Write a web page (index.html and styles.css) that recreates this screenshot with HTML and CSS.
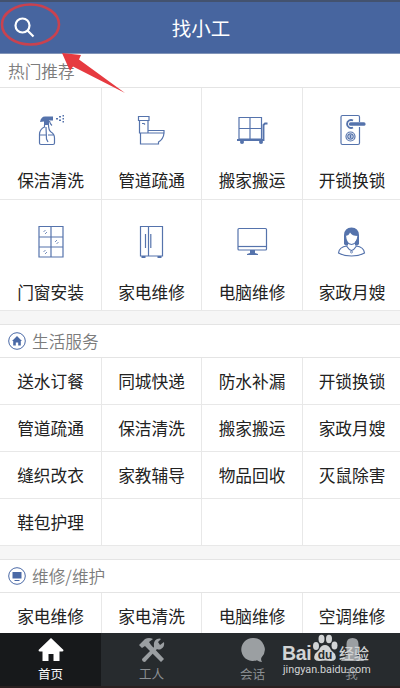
FILE: index.html
```
<!DOCTYPE html>
<html lang="zh-CN">
<head>
    <meta charset="UTF-8">
    <meta name="viewport" content="width=device-width, initial-scale=1.0">
    <title>找小工</title>
    <link rel="stylesheet" href="styles.css">
</head>
<body>
    <div class="app">
        <header class="header">
            <svg class="search-icon" width="22" height="22" viewBox="0 0 22 22">
                <circle cx="8.500" cy="8.500" r="7"/>
                <path d="M13.500 13.500L19.500 19.500"/>
            </svg>
            <h1>找小工</h1>
        </header>

        <section class="section">
            <h2 class="section-title">热门推荐</h2>
            <div class="grid hot">
                <div class="cell">
                    <svg class="icon" viewBox="0 0 41 40">
                        <path class="fill" d="M10 12Q11 6.500 15 6.500H23V10.500H19V15H14V11.500Z"/>
                        <path d="M14.500 15V17Q10 19 9.500 24V33Q9.500 34.500 11 34.500H23Q24.500 34.500 24.500 33V28Q24.500 24 21 22Q18.500 20 18.500 15M19.500 11Q20 14 22 15.500M16 17L16.500 29L18 32M9.500 25H16M18 25H23.500"/>
                        <path class="fill" d="M26 8h2v1.500h-2zM29 6h2v1.500h-2zM29 9.500h2V11h-2zM32.500 5h1.500v1.500h-1.500zM32.500 8h1.500v1.500h-1.500zM32.500 11h1.500v1.500h-1.500z"/>
                    </svg>
                    <span>保洁清洗</span>
                </div>
                <div class="cell">
                    <svg class="icon" viewBox="0 0 41 40">
                        <path d="M7.500 6.500H18V10.500H7.500ZM8.500 10.500V23H17V10.500M11 13.500H13L14 14.500M17 20.500H33V23H9.500V34H27.500V32Q32.500 29 33 23"/>
                    </svg>
                    <span>管道疏通</span>
                </div>
                <div class="cell">
                    <svg class="icon" viewBox="0 0 41 40">
                        <path d="M7 7.500H29.500V29H7ZM18 7.500V29M7 18.500H29.500"/>
                        <path class="thick" d="M5 30H31.500V15L33 13.500H35.500"/>
                        <circle class="fill" cx="10" cy="32" r="2"/>
                        <circle class="fill" cx="29" cy="32" r="2"/>
                    </svg>
                    <span>搬家搬运</span>
                </div>
                <div class="cell">
                    <svg class="icon" viewBox="0 0 41 40">
                        <path d="M27.500 12V7Q27.500 5.500 26 5.500H10.500Q9 5.500 9 7V33Q9 34.500 10.500 34.500H26Q27.500 34.500 27.500 33V17"/>
                        <path class="thick" d="M21 10.500A4 4 0 1 0 21 17.500"/>
                        <rect class="fill" x="17" y="12.300" width="16.500" height="3.500" rx="1.500"/>
                        <circle cx="18.500" cy="26.500" r="4.500"/>
                        <circle cx="18.500" cy="26.500" r="2.700"/>
                        <path class="thick" d="M18.500 24.800V28.200"/>
                    </svg>
                    <span>开锁换锁</span>
                </div>
                <div class="cell">
                    <svg class="icon" viewBox="0 0 41 40">
                        <path d="M9 4.500H33V35H9ZM21 4.500V35M9 15H33M9 25H33"/>
                        <path class="thin" d="M13.500 10l2-2M15 12l2-2M25 20l2-2M26.500 22l2-2M13.500 30l2-2M15 32l2-2"/>
                    </svg>
                    <span>门窗安装</span>
                </div>
                <div class="cell">
                    <svg class="icon" viewBox="0 0 41 40">
                        <path d="M9.500 4.500H31.500V34H9.500ZM17.500 4.500V34M14.500 12V26M19.800 12V26"/>
                        <path class="fill" d="M10.500 34h4v2h-4zM26.500 34h4v2h-4z"/>
                    </svg>
                    <span>家电维修</span>
                </div>
                <div class="cell">
                    <svg class="icon" viewBox="0 0 41 40">
                        <rect x="6" y="6.500" width="28.500" height="21.500" rx="1"/>
                        <path d="M6 24.500H34.500"/>
                        <path class="fill" d="M18 28h5v3l3 1v1H15v-1l3-1z"/>
                    </svg>
                    <span>电脑维修</span>
                </div>
                <div class="cell">
                    <svg class="icon" viewBox="0 0 41 40">
                        <path class="fill" d="M12 22V13Q12.500 5.500 19.500 5.500T27 13V22Q26 24 23 23.500V20Q26 17 26 14Q20 14 18 10.500Q17 13.500 13.500 14Q13.500 18 16 20.500V23.500Q13 24 12 22Z"/>
                        <path d="M13.500 14Q14 22 19.500 22.500Q25 22 26 14M15 24Q7 25 6.500 31Q12 34 19.500 34T32.500 31Q32 25 24 24M14.500 24Q17 28 19.500 28.500Q22 28 24.500 24"/>
                        <circle class="thin" cx="19.500" cy="30" r="1"/>
                    </svg>
                    <span>家政月嫂</span>
                </div>
            </div>
        </section>

        <section class="section">
            <h2 class="section-title with-icon">
                <svg width="18" height="18" viewBox="0 0 18 18">
                    <circle cx="9" cy="9" r="8.300"/>
                    <path class="fill" d="M9 4L14 9H12.800V13.500H10.200V10.500H7.800V13.500H5.200V9H4Z"/>
                </svg>
                生活服务
            </h2>
            <div class="grid list">
                <div class="cell">送水订餐</div>
                <div class="cell">同城快递</div>
                <div class="cell">防水补漏</div>
                <div class="cell">开锁换锁</div>
                <div class="cell">管道疏通</div>
                <div class="cell">保洁清洗</div>
                <div class="cell">搬家搬运</div>
                <div class="cell">家政月嫂</div>
                <div class="cell">缝织改衣</div>
                <div class="cell">家教辅导</div>
                <div class="cell">物品回收</div>
                <div class="cell">灭鼠除害</div>
                <div class="cell">鞋包护理</div>
                <div class="cell"></div>
                <div class="cell"></div>
                <div class="cell"></div>
            </div>
        </section>

        <section class="section">
            <h2 class="section-title with-icon">
                <svg width="18" height="18" viewBox="0 0 18 18">
                    <circle cx="9" cy="9" r="8.300"/>
                    <path class="fill" d="M4.500 5H13.500V11.500H4.500ZM6.500 13H11.500V14H6.500Z"/>
                </svg>
                维修/维护
            </h2>
            <div class="grid list">
                <div class="cell">家电维修</div>
                <div class="cell">家电清洗</div>
                <div class="cell">电脑维修</div>
                <div class="cell">空调维修</div>
            </div>
        </section>

        <nav class="tabbar">
            <div class="tab active">
                <svg viewBox="0 0 28 26"><path d="M14 1L26.500 13Q26.500 14.500 25 14.500H22.500V24H16.500V17H11.500V24H5.500V14.500H3Q1.500 14.500 1.500 13Z"/></svg>
                <span>首页</span>
            </div>
            <div class="tab">
                <svg viewBox="0 0 28 26">
                    <path d="M1 8L7 2Q11 0 15 2L11 5L13 8L26 22L23 25L9 11L7 9L4 11Z"/>
                    <path d="M4 22L16 10Q15 4 19 2Q22 1 23 2L20 5L22 8L26 5Q27 10 23 12Q21 13 19 12L7 25Q4 25 4 22Z"/>
                </svg>
                <span>工人</span>
            </div>
            <div class="tab">
                <svg viewBox="0 0 28 26"><path d="M14 1A11.500 11.500 0 1 0 18 23.200Q20 25 23 25Q21.500 22.500 22.500 20.500A11.500 11.500 0 0 0 14 1Z"/></svg>
                <span>会话</span>
            </div>
            <div class="tab">
                <svg viewBox="0 0 28 26"><path d="M8.500 7Q8.500 1 14.500 1T20.500 7V13Q20.500 16 18 18Q25 20 26 24H3Q4 20 11 18Q8.500 16 8.500 13Z"/></svg>
                <span>我</span>
            </div>
        </nav>

        <div class="watermark">
            <div class="brand">
                <span class="bai">Bai</span>
                <svg width="26" height="28" viewBox="0 0 26 28">
                    <ellipse cx="4" cy="12" rx="3" ry="4"/>
                    <ellipse cx="9.500" cy="5" rx="3" ry="4.200"/>
                    <ellipse cx="17" cy="5" rx="3" ry="4.200"/>
                    <ellipse cx="22.500" cy="11.500" rx="3" ry="4"/>
                    <path d="M13 11Q17 11 19 16L23 20Q26 27 19 27Q13 26 7 27Q0 27 3 20L7 16Q9 11 13 11Z"/>
                    <text x="13" y="24.500" text-anchor="middle">du</text>
                </svg>
                <span class="jingyan">经验</span>
            </div>
            <div class="url">jingyan.baidu.com</div>
        </div>

        <!-- hint pointing at the search button -->
        <svg class="hint" width="130" height="96" viewBox="0 0 130 96">
            <ellipse cx="30.500" cy="24.500" rx="28.500" ry="20"/>
            <path d="M62 53L81 55L79 59.500L125 93L73 66.500L70 71Z"/>
        </svg>
    </div>
</body>
</html>
```
FILE: styles.css
```
* {
    box-sizing: border-box;
}
body {
    margin: 0;
    font-family: "Noto Sans CJK SC", sans-serif;
    color: #222;
    background: #f6f6f6;
}
.app {
    position: relative;
    width: 400px;
    height: 688px;
    overflow: hidden;
    display: flex;
    flex-direction: column;
}
.header {
    display: flex;
    align-items: center;
    height: 54px;
    flex-shrink: 0;
    padding: 0 14px;
    background: #47659f;
    border-top: 2px solid #43526f;
    border-bottom: 1px solid #8194b8;
    color: #fff;
}
.header h1 {
    flex: 1;
    margin: 0 20px 0 0;
    font-size: 19.5px;
    font-weight: 400;
    line-height: 28px;
    text-align: center;
}
.search-icon {
    fill: none;
    stroke: #fff;
    stroke-width: 2.2;
}
.section {
    flex-shrink: 0;
    margin-bottom: 13px;
    background: #fff;
}
.section-title {
    display: flex;
    align-items: center;
    height: 34px;
    margin: 0;
    padding: 1px 8px 0;
    border-bottom: 1px solid #e4e4e4;
    color: #7c7c7c;
    font-size: 16.7px;
    font-weight: 350;
}
.section-title.with-icon {
    gap: 6px;
    padding-top: 0;
    border-top: 1px solid #e4e4e4;
}
.section-title svg {
    fill: none;
    stroke: #4a69a6;
}
.section-title .fill {
    fill: #4a69a6;
    stroke: none;
}
.grid {
    display: grid;
    grid-template-columns: 102px 100px 101px 99px;
}
.cell {
    display: flex;
    align-items: center;
    justify-content: center;
    border-right: 1px solid #e8e8e8;
    border-bottom: 1px solid #e8e8e8;
    font-size: 16.7px;
    line-height: 22px;
}
.hot .cell {
    flex-direction: column;
    justify-content: flex-start;
    gap: 19px;
    height: 112px;
    padding-top: 22px;
}
.hot .cell:nth-child(n+5) {
    height: 111px;
}
.list .cell {
    height: 47px;
    padding-bottom: 1px;
}
.icon {
    width: 41px;
    height: 40px;
    fill: none;
    stroke: #5573ac;
    stroke-width: 1.2;
}
.icon .fill {
    fill: #5573ac;
    stroke: none;
}
.icon .thick {
    stroke-width: 1.9;
}
.icon .thin {
    stroke-width: 0.8;
}
.tabbar {
    position: absolute;
    left: 0;
    right: 0;
    bottom: 0;
    display: grid;
    grid-template-columns: 101px 101px 101px 97px;
    height: 55px;
    background: #272b2e;
    border-bottom: 2px solid #292020;
}
.tab {
    display: flex;
    flex-direction: column;
    align-items: center;
    padding-top: 4px;
    color: #8b8f93;
    font-size: 12.5px;
    line-height: 18px;
}
.tab svg {
    width: 28px;
    height: 26px;
    margin-bottom: 2px;
    fill: #9b9fa2;
}
.tab.active {
    background: #17191b;
    color: #fff;
}
.tab.active svg {
    fill: #fff;
}
.watermark {
    position: absolute;
    left: 282px;
    top: 634px;
    color: #d2d4d5;
}
.brand {
    display: flex;
    align-items: flex-end;
    height: 28px;
}
.bai {
    width: 30px;
    font: bold 19.5px/17px "Liberation Sans", sans-serif;
    letter-spacing: -0.3px;
}
.brand svg {
    fill: #d2d4d5;
}
.brand text {
    fill: #272b2e;
    font: bold 12px "Liberation Sans", sans-serif;
}
.jingyan {
    margin-left: 1px;
    font-size: 15px;
    font-weight: 500;
    line-height: 19px;
}
.url {
    margin: 1px 0 0 1px;
    font: 10.8px/14px Roboto, sans-serif;
}
.hint {
    position: absolute;
    left: 0;
    top: 0;
    fill: #e63a40;
}
.hint ellipse {
    fill: none;
    stroke: #c9424f;
    stroke-width: 2.6;
}
```
